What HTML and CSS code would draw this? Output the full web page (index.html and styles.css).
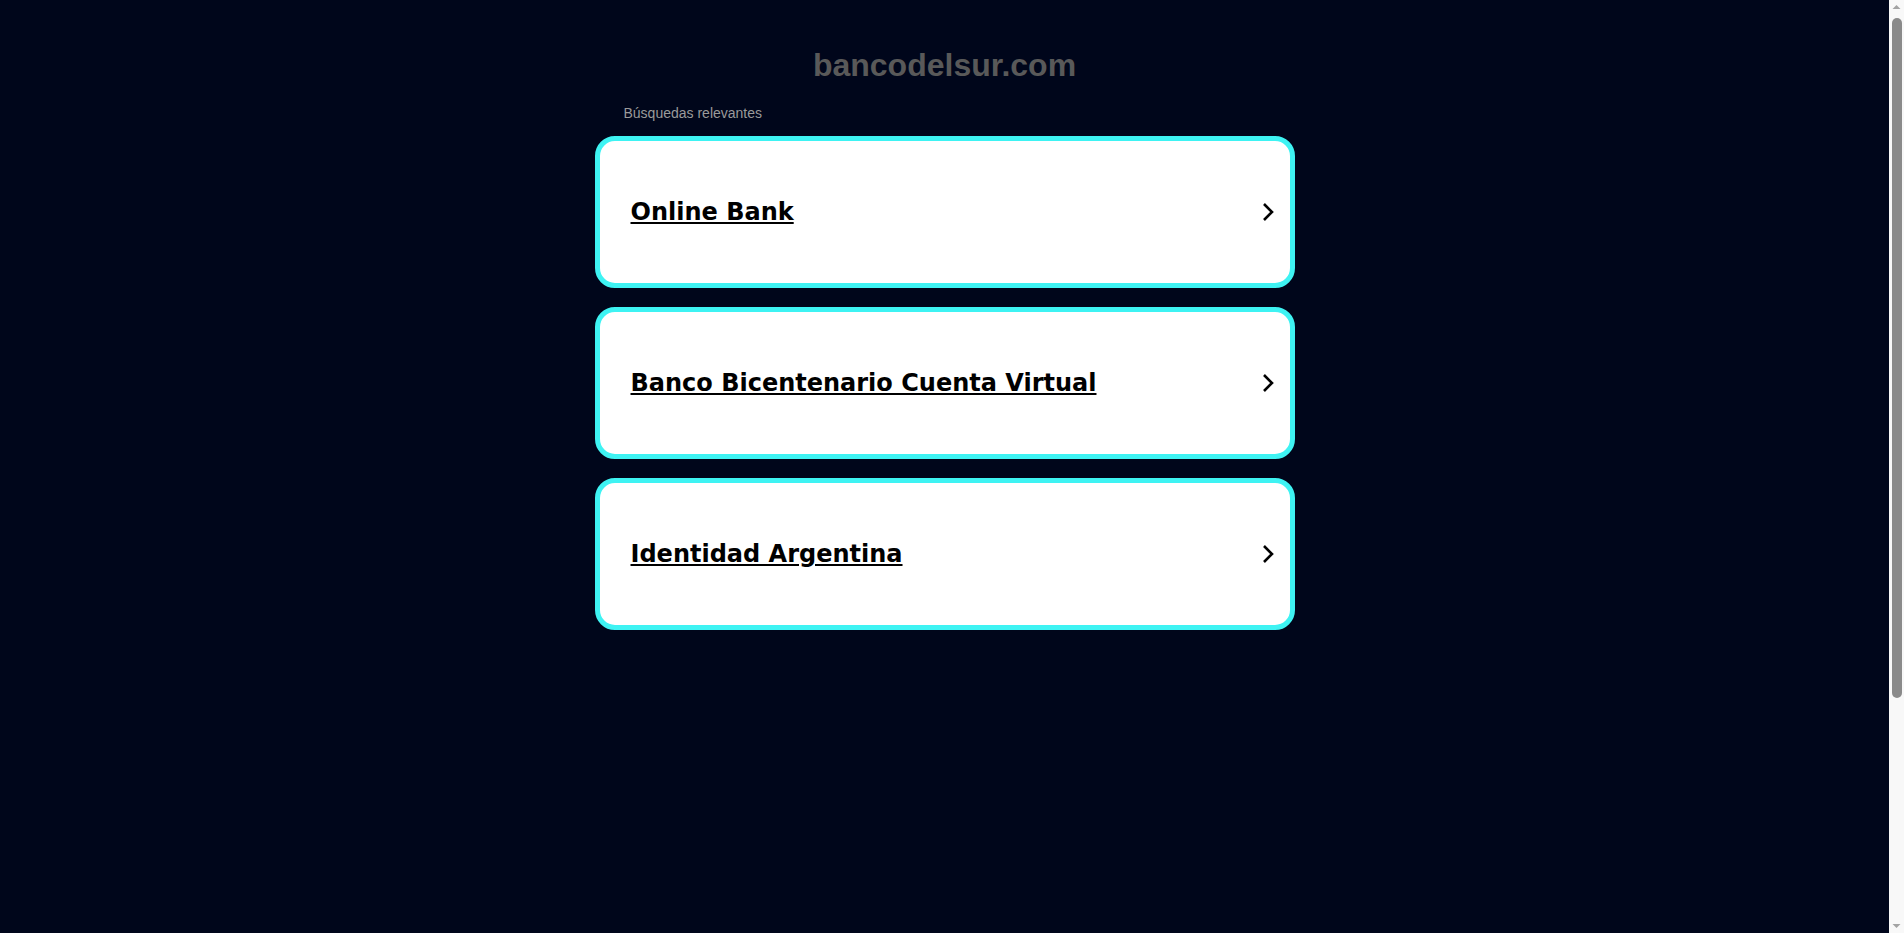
FILE: index.html
```html
<!DOCTYPE html>
<html lang="es">
<head>
<meta charset="utf-8">
<title>bancodelsur.com</title>
<link rel="stylesheet" href="styles.css">
</head>
<body>
<main class="viewport">
  <div class="page">
    <h1 class="domain">bancodelsur.com</h1>
    <div class="label">Búsquedas relevantes</div>
    <ul class="list">
      <li class="card"><a class="link" href="#">Online Bank</a><svg class="chev" viewBox="0 0 12 20" width="12" height="20"><path d="M2 2 L10 10 L2 18" fill="none" stroke="#000" stroke-width="2.6"/></svg></li>
      <li class="card"><a class="link" href="#">Banco Bicentenario Cuenta Virtual</a><svg class="chev" viewBox="0 0 12 20" width="12" height="20"><path d="M2 2 L10 10 L2 18" fill="none" stroke="#000" stroke-width="2.6"/></svg></li>
      <li class="card"><a class="link" href="#">Identidad Argentina</a><svg class="chev" viewBox="0 0 12 20" width="12" height="20"><path d="M2 2 L10 10 L2 18" fill="none" stroke="#000" stroke-width="2.6"/></svg></li>
    </ul>
  </div>
</main>
<aside class="scrollbar" aria-hidden="true">
  <svg class="arrow" viewBox="0 0 15 14" width="15" height="14"><path d="M3.5 9 L7.5 5 L11.5 9 Z" fill="#a3a3a3"/></svg>
  <div class="track"><div class="thumb"></div></div>
  <svg class="arrow" viewBox="0 0 15 14" width="15" height="14"><path d="M3.5 5 L7.5 9 L11.5 5 Z" fill="#a3a3a3"/></svg>
</aside>
</body>
</html>
```
FILE: styles.css
```css
html, body {
  margin: 0;
  padding: 0;
  background: #00061b;
}
body {
  height: 100vh;
  overflow: hidden;
  display: flex;
  font-family: "Liberation Sans", Arial, sans-serif;
}
.viewport {
  flex: 1;
  min-width: 0;
}
.page {
  width: 700px;
  margin: 0 auto;
  padding-top: 45px;
}
.domain {
  margin: 0;
  font-size: 32px;
  line-height: 40px;
  font-weight: bold;
  color: #595959;
  text-align: center;
}
.label {
  margin-top: 20px;
  padding-left: 29px;
  font-size: 14px;
  line-height: 16px;
  color: #9a9a9a;
}
.list {
  list-style: none;
  margin: 15px 0 0;
  padding: 0;
  display: flex;
  flex-direction: column;
  gap: 19px;
}
.card {
  box-sizing: border-box;
  height: 152px;
  background: #fff;
  border: 5px solid #3ef3f3;
  border-radius: 20px;
  display: flex;
  align-items: center;
  justify-content: space-between;
  padding: 0 16px 0 31px;
}
.link {
  font-family: "DejaVu Sans", Verdana, sans-serif;
  font-weight: bold;
  font-size: 24px;
  color: #000;
  text-decoration: underline;
}
.chev {
  display: block;
}
.scrollbar {
  width: 15px;
  flex: none;
  background: #f8f8f8;
  display: flex;
  flex-direction: column;
}
.arrow {
  display: block;
  flex: none;
}
.track {
  flex: 1;
  padding: 4px 2px 0 3px;
}
.thumb {
  height: 680px;
  background: #8a8a8a;
  border-radius: 5px;
}
```
